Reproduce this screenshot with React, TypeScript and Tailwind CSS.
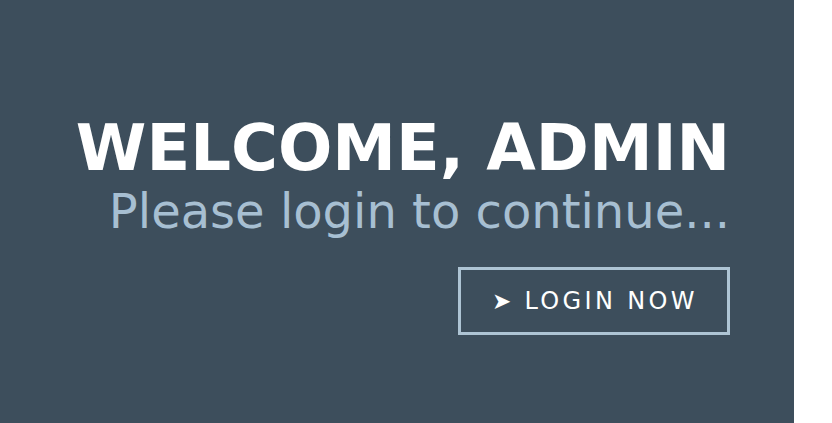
export default function App() {
  return (
    <div className="flex h-[423px] w-[832px] bg-white" style={{ fontFamily: '"DejaVu Sans", sans-serif' }}>
      {/* Welcome panel */}
      <div className="flex h-full w-[794px] flex-col items-end bg-[#3d4e5c] pr-16 pt-[116px]">
        <h1 className="text-[64px] font-bold leading-none text-white">WELCOME, ADMIN</h1>
        <p className="mt-[7px] text-[48px] leading-none text-[#a7bfd2]">Please login to continue...</p>
        <button className="mt-[32px] flex h-[68px] w-[272px] items-center justify-center border-[3px] border-[#aec4d4] pl-[2px] text-[24px] leading-none tracking-[0.14em] text-white">
          <span className="mr-[13px] text-[23px] tracking-normal">➤</span>
          LOGIN NOW
        </button>
      </div>
    </div>
  );
}
